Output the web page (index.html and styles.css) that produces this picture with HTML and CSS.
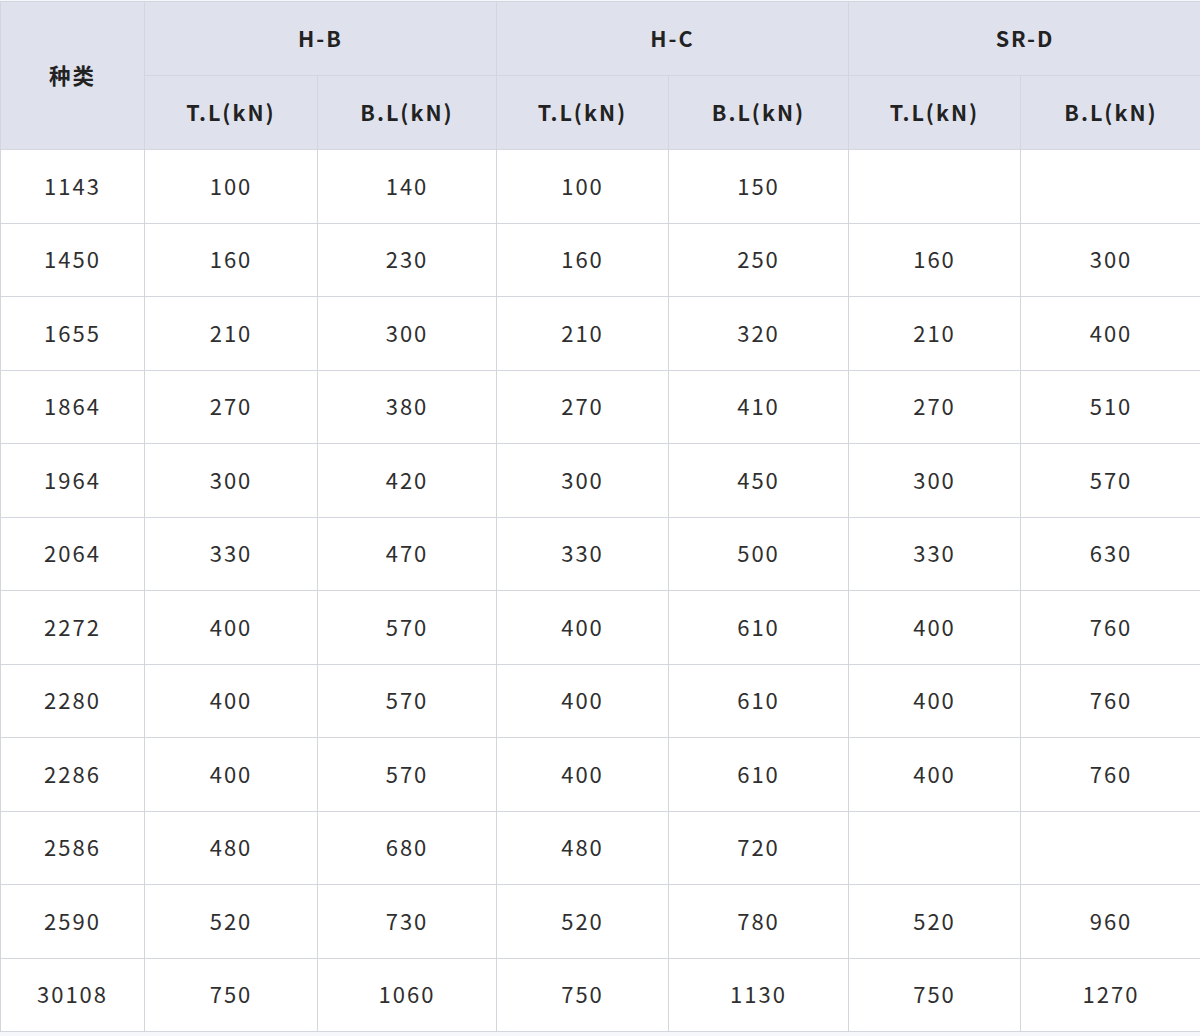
FILE: index.html
```html
<!DOCTYPE html>
<html lang="zh">
<head>
<meta charset="utf-8">
<title>种类</title>
<link rel="stylesheet" href="styles.css">
</head>
<body>
<table class="spec">
  <colgroup>
    <col class="c-kind">
    <col class="c-a">
    <col class="c-b">
    <col class="c-a2">
    <col class="c-b2">
    <col class="c-a3">
    <col class="c-b3">
  </colgroup>
  <thead>
    <tr class="hrow">
      <th rowspan="2">种类</th>
      <th colspan="2">H-B</th>
      <th colspan="2">H-C</th>
      <th colspan="2">SR-D</th>
    </tr>
    <tr class="hrow">
      <th>T.L(kN)</th><th>B.L(kN)</th>
      <th>T.L(kN)</th><th>B.L(kN)</th>
      <th>T.L(kN)</th><th>B.L(kN)</th>
    </tr>
  </thead>
  <tbody>
    <tr><td>1143</td><td>100</td><td>140</td><td>100</td><td>150</td><td></td><td></td></tr>
    <tr><td>1450</td><td>160</td><td>230</td><td>160</td><td>250</td><td>160</td><td>300</td></tr>
    <tr><td>1655</td><td>210</td><td>300</td><td>210</td><td>320</td><td>210</td><td>400</td></tr>
    <tr><td>1864</td><td>270</td><td>380</td><td>270</td><td>410</td><td>270</td><td>510</td></tr>
    <tr><td>1964</td><td>300</td><td>420</td><td>300</td><td>450</td><td>300</td><td>570</td></tr>
    <tr><td>2064</td><td>330</td><td>470</td><td>330</td><td>500</td><td>330</td><td>630</td></tr>
    <tr><td>2272</td><td>400</td><td>570</td><td>400</td><td>610</td><td>400</td><td>760</td></tr>
    <tr><td>2280</td><td>400</td><td>570</td><td>400</td><td>610</td><td>400</td><td>760</td></tr>
    <tr><td>2286</td><td>400</td><td>570</td><td>400</td><td>610</td><td>400</td><td>760</td></tr>
    <tr><td>2586</td><td>480</td><td>680</td><td>480</td><td>720</td><td></td><td></td></tr>
    <tr><td>2590</td><td>520</td><td>730</td><td>520</td><td>780</td><td>520</td><td>960</td></tr>
    <tr><td>30108</td><td>750</td><td>1060</td><td>750</td><td>1130</td><td>750</td><td>1270</td></tr>
  </tbody>
</table>
</body>
</html>
```
FILE: styles.css
```css
html, body {
  margin: 0;
  padding: 0;
  background: #f6f7fa;
}
body {
  padding-top: 1px;
  overflow: hidden;
}
.spec {
  border-collapse: collapse;
  table-layout: fixed;
  width: 1201px;
  background: #ffffff;
  font-family: "Noto Sans CJK SC", "Noto Sans", sans-serif;
  color: #2f2f2f;
  letter-spacing: 2px;
}
.c-kind { width: 144px; }
.c-a { width: 173px; }
.c-b { width: 179px; }
.c-a2 { width: 172px; }
.c-b2 { width: 180px; }
.c-a3 { width: 172px; }
.c-b3 { width: 181px; }
.spec th,
.spec td {
  border: 1px solid #d3d5df;
  text-align: center;
  vertical-align: middle;
  padding: 0;
}
.spec th {
  background: #dfe1ec;
  color: #222222;
  font-weight: 700;
  font-size: 21.5px;
  height: 71px;
  padding-bottom: 2px;
}
.spec td {
  font-size: 22px;
  height: 69.5px;
  padding-bottom: 3px;
}
```
